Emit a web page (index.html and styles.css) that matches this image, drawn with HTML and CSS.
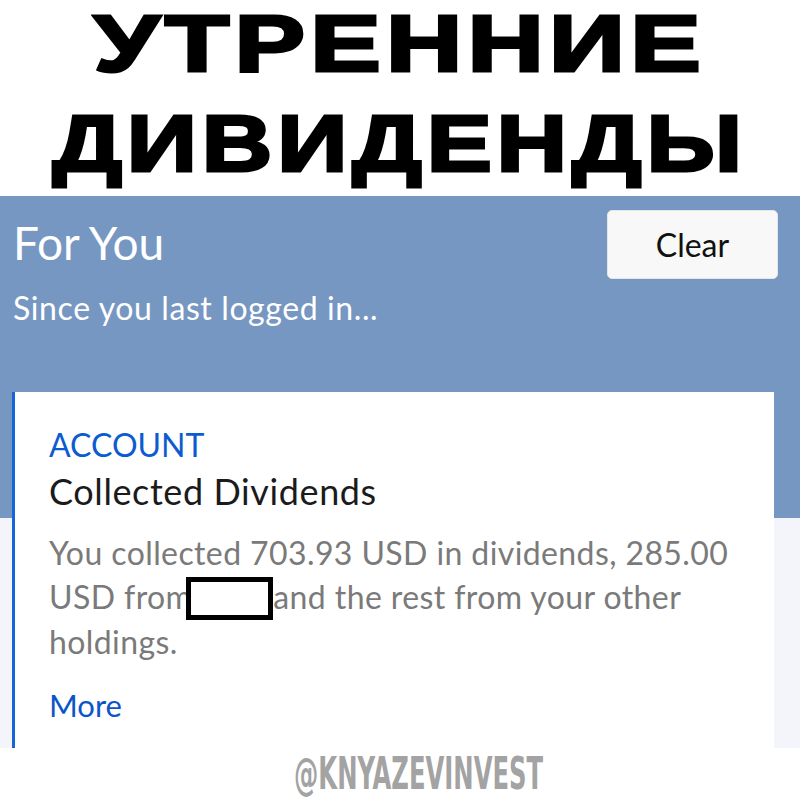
FILE: index.html
```html
<!DOCTYPE html>
<html lang="ru">
  <head>
    <meta charset="UTF-8">
    <meta name="viewport" content="width=device-width, initial-scale=1.0">
    <title>Утренние дивиденды</title>
    <link rel="stylesheet" href="styles.css">
  </head>
  <body>
    <h1 class="headline">
      <span class="headline-line">УТРЕННИЕ</span>
      <span class="headline-line">ДИВИДЕНДЫ</span>
    </h1>

    <section class="for-you">
      <div class="for-you-top">
        <h2>For You</h2>
        <button class="clear-btn">Clear</button>
      </div>
      <p class="since">Since you last logged in...</p>

      <div class="card">
        <div class="card-kind">ACCOUNT</div>
        <h3 class="card-title">Collected Dividends</h3>
        <p class="card-text">
          You collected 703.93 USD in dividends, 285.00
          USD from<span class="redacted"></span>and the rest from your other
          holdings.
        </p>
        <a class="card-more" href="#">More</a>
      </div>
    </section>

    <div class="signature">
      <span class="signature-text">@KNYAZEVINVEST</span>
    </div>
  </body>
</html>
```

FILE: styles.css
```css
body {
  margin: 0;
  background-color: #fff;
  font-family: Lato, "Open Sans", sans-serif;
  overflow: hidden;
}
.headline {
  margin: 0 0 8px;
  text-align: center;
  font-family: "Liberation Sans", Arial, sans-serif;
  font-weight: bold;
  font-size: 80px;
  line-height: 88px;
  color: #000;
}
.headline-line {
  display: block;
  width: fit-content;
  margin: 0 auto;
  letter-spacing: 4px;
  -webkit-text-stroke: 3px #000;
  transform: scaleX(1.32);
}
.headline-line + .headline-line {
  margin-top: 12px;
  transform: scaleX(1.22);
}
.for-you {
  height: 552px;
  padding: 14px 22px 0 13px;
  box-sizing: border-box;
  background: linear-gradient(#7697c1 0, #7697c1 322px, #f4f5fa 322px);
}
.for-you-top {
  display: flex;
  justify-content: space-between;
  align-items: flex-start;
}
.for-you h2 {
  margin: 7px 0 0;
  font-size: 46px;
  font-weight: normal;
  line-height: 52px;
  color: #fff;
}
.clear-btn {
  width: 171px;
  height: 69px;
  background-color: #f8f8f8;
  border: 1px solid #e6e6e6;
  border-radius: 5px;
  font-family: Lato, sans-serif;
  font-size: 32px;
  color: #111;
  cursor: pointer;
}
.since {
  margin: 11px 0 0;
  font-size: 32px;
  letter-spacing: 0.6px;
  line-height: 36px;
  color: #fff;
}
.card {
  margin: 66px 4px 0 -1px;
  height: 356px;
  padding: 33px 20px 0 34px;
  box-sizing: border-box;
  background-color: #fff;
  border-left: 3px solid #1565d8;
}
.card-kind {
  font-size: 32px;
  line-height: 40px;
  color: #0d5bd0;
}
.card-title {
  margin: 6px 0 0;
  font-size: 36px;
  font-weight: normal;
  letter-spacing: 0.6px;
  line-height: 40px;
  color: #1b1b1b;
}
.card-text {
  margin: 20px 0 0;
  font-size: 32px;
  letter-spacing: 0.4px;
  line-height: 44px;
  color: #7a7a7a;
}
.redacted {
  display: inline-block;
  width: 77px;
  height: 33px;
  margin-left: -6px;
  border: 5px solid #000;
  background-color: #fff;
  vertical-align: -11px;
}
.card-more {
  display: block;
  width: fit-content;
  margin-top: 21px;
  font-size: 31px;
  line-height: 40px;
  color: #0b55c9;
  text-decoration: none;
}
.signature {
  height: 52px;
  padding-left: 38px;
  text-align: center;
}
.signature-text {
  display: inline-block;
  font-family: "DejaVu Sans Condensed", "DejaVu Sans", sans-serif;
  font-weight: bold;
  font-size: 45px;
  line-height: 52px;
  color: #a3a3a3;
  transform: scaleX(0.6);
}
```
